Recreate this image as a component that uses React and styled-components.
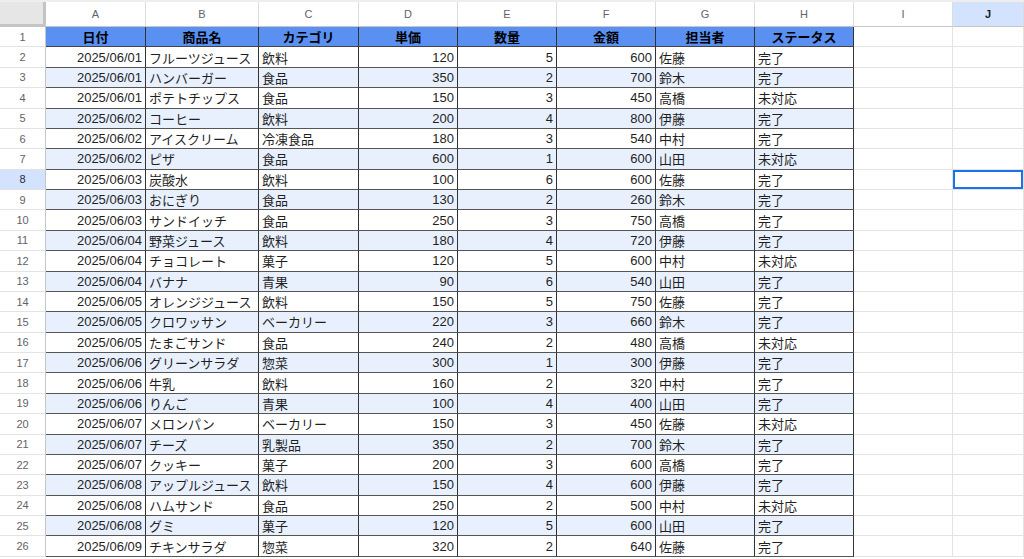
import styled, { createGlobalStyle } from "styled-components";

const GlobalStyle = createGlobalStyle`
  html, body {
    margin: 0;
    padding: 0;
    background: #ffffff;
  }
  body {
    font-family: "Liberation Sans", Arial, "Noto Sans CJK JP", sans-serif;
    overflow: hidden;
  }
`;

const columns = ["A", "B", "C", "D", "E", "F", "G", "H", "I", "J"];
const headers = ["日付", "商品名", "カテゴリ", "単価", "数量", "金額", "担当者", "ステータス"];
const numeric = [false, false, false, true, true, true, false, false];

const rows = [
  ["2025/06/01", "フルーツジュース", "飲料", 120, 5, 600, "佐藤", "完了"],
  ["2025/06/01", "ハンバーガー", "食品", 350, 2, 700, "鈴木", "完了"],
  ["2025/06/01", "ポテトチップス", "食品", 150, 3, 450, "高橋", "未対応"],
  ["2025/06/02", "コーヒー", "飲料", 200, 4, 800, "伊藤", "完了"],
  ["2025/06/02", "アイスクリーム", "冷凍食品", 180, 3, 540, "中村", "完了"],
  ["2025/06/02", "ピザ", "食品", 600, 1, 600, "山田", "未対応"],
  ["2025/06/03", "炭酸水", "飲料", 100, 6, 600, "佐藤", "完了"],
  ["2025/06/03", "おにぎり", "食品", 130, 2, 260, "鈴木", "完了"],
  ["2025/06/03", "サンドイッチ", "食品", 250, 3, 750, "高橋", "完了"],
  ["2025/06/04", "野菜ジュース", "飲料", 180, 4, 720, "伊藤", "完了"],
  ["2025/06/04", "チョコレート", "菓子", 120, 5, 600, "中村", "未対応"],
  ["2025/06/04", "バナナ", "青果", 90, 6, 540, "山田", "完了"],
  ["2025/06/05", "オレンジジュース", "飲料", 150, 5, 750, "佐藤", "完了"],
  ["2025/06/05", "クロワッサン", "ベーカリー", 220, 3, 660, "鈴木", "完了"],
  ["2025/06/05", "たまごサンド", "食品", 240, 2, 480, "高橋", "未対応"],
  ["2025/06/06", "グリーンサラダ", "惣菜", 300, 1, 300, "伊藤", "完了"],
  ["2025/06/06", "牛乳", "飲料", 160, 2, 320, "中村", "完了"],
  ["2025/06/06", "りんご", "青果", 100, 4, 400, "山田", "完了"],
  ["2025/06/07", "メロンパン", "ベーカリー", 150, 3, 450, "佐藤", "未対応"],
  ["2025/06/07", "チーズ", "乳製品", 350, 2, 700, "鈴木", "完了"],
  ["2025/06/07", "クッキー", "菓子", 200, 3, 600, "高橋", "完了"],
  ["2025/06/08", "アップルジュース", "飲料", 150, 4, 600, "伊藤", "完了"],
  ["2025/06/08", "ハムサンド", "食品", 250, 2, 500, "中村", "未対応"],
  ["2025/06/08", "グミ", "菓子", 120, 5, 600, "山田", "完了"],
  ["2025/06/09", "チキンサラダ", "惣菜", 320, 2, 640, "佐藤", "完了"],
];

const SELECTED_ROW = 8;
const SELECTED_COL = "J";

const App = () => {
  return (
    <Page>
      <GlobalStyle />
      <TopStrip />
      <Sheet>
        <Corner />
        {columns.map((c) => (
          <ColHead key={c} $active={c === SELECTED_COL}>{c}</ColHead>
        ))}

        <RowHead>1</RowHead>
        {headers.map((h) => (
          <HeadCell key={h}>{h}</HeadCell>
        ))}
        <EmptyCell />
        <EmptyCell />

        {rows.map((row, i) => {
          const n = i + 2;
          return [
            <RowHead key={"h" + n} $active={n === SELECTED_ROW}>{n}</RowHead>,
            ...row.map((v, j) => (
              <DataCell key={n + "-" + j} $alt={n % 2 === 1} $right={numeric[j] || j === 0}>
                {v}
              </DataCell>
            )),
            <EmptyCell key={"i" + n} />,
            <EmptyCell key={"j" + n} $selected={n === SELECTED_ROW} />,
          ];
        })}
      </Sheet>
    </Page>
  );
};
export default App;

const Page = styled.div`
  width: 1024px;
  height: 559px;
  overflow: hidden;
  background: #ffffff;
`;

const TopStrip = styled.div`
  height: 2px;
  background: #eeeeee;
`;

const Sheet = styled.div`
  display: grid;
  grid-template-columns: 46px 100px 113px 100px 99px 99px 99px 99px 99px 99px 1fr;
  grid-template-rows: 25px repeat(26, 20.38px);
  font-size: 13px;
  color: #1f1f1f;
`;

const Corner = styled.div`
  background: #e6e6e6;
  border-right: 3px solid #c4c4c4;
  border-bottom: 3px solid #c4c4c4;
`;

const ColHead = styled.div`
  display: flex;
  align-items: center;
  justify-content: center;
  font-size: 11px;
  color: ${(p) => (p.$active ? "#1f1f1f" : "#5f6368")};
  font-weight: ${(p) => (p.$active ? "bold" : "normal")};
  background: ${(p) => (p.$active ? "#d3e3fd" : "#ffffff")};
  border-right: 1px solid #dadce0;
  border-bottom: 1px solid #c4c7c5;
`;

const RowHead = styled.div`
  display: flex;
  align-items: center;
  justify-content: center;
  font-size: 11px;
  color: ${(p) => (p.$active ? "#1f2a4d" : "#5f6368")};
  background: ${(p) => (p.$active ? "#d3e3fd" : "#ffffff")};
  border-right: 1px solid #c4c7c5;
  border-bottom: 1px solid #e3e3e3;
`;

const HeadCell = styled.div`
  display: flex;
  align-items: center;
  justify-content: center;
  background: #5990f2;
  color: #000000;
  font-weight: bold;
  border-right: 1px solid #333333;
  border-bottom: 1px solid #444444;
  white-space: nowrap;
`;

const DataCell = styled.div`
  display: flex;
  align-items: center;
  justify-content: ${(p) => (p.$right ? "flex-end" : "flex-start")};
  padding: 0 3px;
  background: ${(p) => (p.$alt ? "#e8f0fe" : "#ffffff")};
  border-right: 1px solid #333333;
  border-bottom: 1px solid #555555;
  white-space: nowrap;
  overflow: hidden;
`;

const EmptyCell = styled.div`
  background: #ffffff;
  border-right: 1px solid #e3e3e3;
  border-bottom: 1px solid #e3e3e3;
  box-shadow: ${(p) => (p.$selected ? "inset 0 0 0 2px #1a73e8" : "none")};
`;
